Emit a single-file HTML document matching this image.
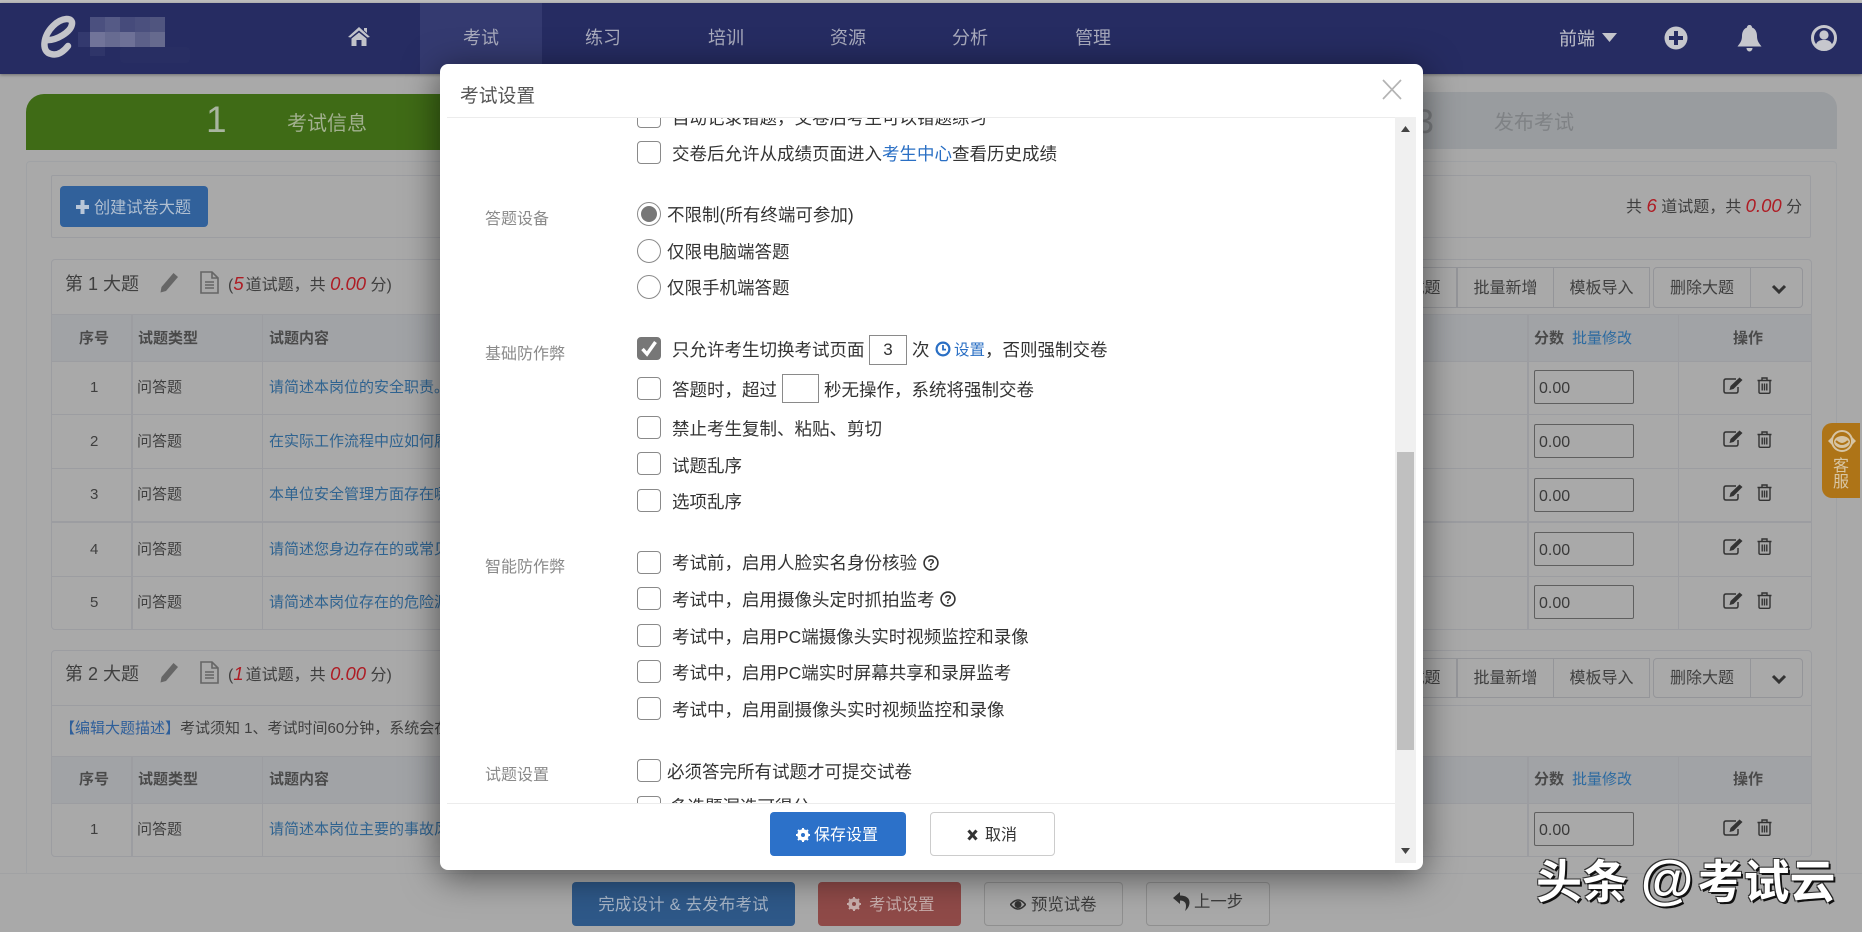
<!DOCTYPE html>
<html lang="zh-CN">
<head>
<meta charset="utf-8">
<title>考试设置</title>
<style>
html,body{margin:0;padding:0;width:1862px;height:932px;overflow:hidden;background:#a9a9a9;}
body{position:relative;font-family:"Liberation Sans","Noto Sans CJK SC",sans-serif;color:#3c3c3c;}
div,span,svg{box-sizing:border-box;}
.a{position:absolute;}
.t{position:absolute;line-height:24px;height:24px;white-space:nowrap;margin-top:1px;}
.nav{color:#a9abbd;font-size:18px;}
.box{position:absolute;border:1px solid #9c9da1;border-radius:4px;}
.hl{position:absolute;height:1px;background:#9c9da1;}
.vl{position:absolute;width:1px;background:#9c9da1;}
.thbg{position:absolute;background:#a1a3a6;}
.th{font-size:15px;font-weight:bold;color:#4a4a4a;}
.td{font-size:15px;color:#3f3f3f;}
.lk{font-size:15px;color:#2f6390;}
.in{position:absolute;left:1534px;width:100px;height:34px;border:1px solid #5f5f5f;border-radius:2px;font-size:16px;line-height:35px;padding-left:4px;color:#3a3a3a;}
.ico{position:absolute;}
.red{color:#ae1c24;font-style:italic;font-size:18.5px;}
.g{position:absolute;border:1px solid #949599;font-size:16px;text-align:center;color:#3f3f3f;}
.ft{position:absolute;top:882px;height:44px;border-radius:4px;font-size:16.4px;line-height:46px;}
.cb{position:absolute;left:637px;width:24px;height:23px;border:1.5px solid #8a8a8a;border-radius:4px;background:#fff;}
.rd{position:absolute;left:637px;width:24px;height:24px;border:1.5px solid #8a8a8a;border-radius:50%;background:#fff;}
.m{position:absolute;font-size:17.5px;line-height:24px;height:24px;white-space:nowrap;color:#333;left:232px;margin-top:1px;}
.lb{position:absolute;font-size:16px;line-height:24px;color:#8a8a8a;white-space:nowrap;left:45px;margin-top:2px;}
.mi{position:absolute;background:#fff;border:1px solid #8a8a8a;font-size:17px;text-align:center;color:#333;}
</style>
</head>
<body>

<!-- top bar -->
<div class="a" style="left:0;top:0;width:1862px;height:3px;background:#bdbdbd;"></div>
<div class="a" style="left:0;top:3px;width:1862px;height:71px;background:#262c62;box-shadow:0 1px 3px rgba(0,0,0,.35);"></div>
<div class="a" style="left:420px;top:3px;width:122px;height:71px;background:#343a70;"></div>

<!-- logo -->
<svg class="ico" style="left:40px;top:15px;" width="38" height="44" viewBox="0 0 38 44"><path d="M6 25 C16 26 31 17 32 9 C33 2 22 2 13 11 C3 21 1 37 11 39 C18 41 24 36 28 31" fill="none" stroke="#c4c5ca" stroke-width="6.5" stroke-linecap="round"/></svg>
<div class="a" style="left:78px;top:32px;width:12px;height:15px;background:#33396e;"></div>
<div class="a" style="left:90px;top:17px;width:15px;height:15px;background:#4b507f;"></div>
<div class="a" style="left:105px;top:17px;width:15px;height:15px;background:#555a86;"></div>
<div class="a" style="left:120px;top:17px;width:15px;height:15px;background:#464b7b;"></div>
<div class="a" style="left:135px;top:17px;width:15px;height:15px;background:#4b507e;"></div>
<div class="a" style="left:150px;top:17px;width:15px;height:15px;background:#50557f;"></div>
<div class="a" style="left:90px;top:32px;width:15px;height:15px;background:#717499;"></div>
<div class="a" style="left:105px;top:32px;width:15px;height:15px;background:#676b91;"></div>
<div class="a" style="left:120px;top:32px;width:15px;height:15px;background:#6e7197;"></div>
<div class="a" style="left:135px;top:32px;width:15px;height:15px;background:#5c6089;"></div>
<div class="a" style="left:150px;top:32px;width:15px;height:15px;background:#666a8e;"></div>
<div class="a" style="left:90px;top:47px;width:15px;height:9px;background:#2f3569;"></div>
<div class="a" style="left:120px;top:47px;width:70px;height:16px;background:#282e63;border-radius:4px;"></div>

<!-- nav -->
<svg class="ico" style="left:347px;top:26px;" width="24" height="20" viewBox="0 0 24 20"><path d="M12 1 L23 11 L20.5 11.5 L12 4.5 L3.5 11.5 L1 11 Z M17 2 h3 v5 l-3 -2.6 Z M4.5 12.5 L12 6.5 L19.5 12.5 V20 H14.5 V14 H9.5 V20 H4.5 Z" fill="#c2c3ca"/></svg>
<div class="t nav" style="left:463px;top:25px;">考试</div>
<div class="t nav" style="left:585px;top:25px;">练习</div>
<div class="t nav" style="left:708px;top:25px;">培训</div>
<div class="t nav" style="left:830px;top:25px;">资源</div>
<div class="t nav" style="left:952px;top:25px;">分析</div>
<div class="t nav" style="left:1075px;top:25px;">管理</div>
<div class="t nav" style="left:1559px;top:26px;color:#c0c1cb;">前端</div>
<svg class="ico" style="left:1602px;top:33px;" width="15" height="9" viewBox="0 0 15 9"><path d="M0 0 H15 L7.5 9 Z" fill="#c4c5cc"/></svg>
<svg class="ico" style="left:1664px;top:26px;" width="24" height="24" viewBox="0 0 24 24"><circle cx="12" cy="12" r="11.5" fill="#c6c7cd"/><path d="M10 5 h4 v5 h5 v4 h-5 v5 h-4 v-5 h-5 v-4 h5 Z" fill="#262c62"/></svg>
<svg class="ico" style="left:1737px;top:25px;" width="25" height="27" viewBox="0 0 25 27"><path d="M12.5 0 C14 0 15 1 15 2.5 C19 4 20 8 20 11 C20 16 22 18 24.5 21.5 H0.5 C3 18 5 16 5 11 C5 8 6 4 10 2.5 C10 1 11 0 12.5 0 Z M9.5 23 H15.5 C15.5 25 14 26.5 12.5 26.5 C11 26.5 9.5 25 9.5 23 Z" fill="#c6c7cd"/></svg>
<svg class="ico" style="left:1811px;top:25px;" width="26" height="26" viewBox="0 0 26 26"><circle cx="13" cy="13" r="11.5" fill="none" stroke="#c6c7cd" stroke-width="3"/><circle cx="13" cy="10" r="4.6" fill="#c6c7cd"/><path d="M4.5 20.5 C6 15.5 9.5 15 13 15 C16.5 15 20 15.5 21.5 20.5 C19 23.5 16 24.5 13 24.5 C10 24.5 7 23.5 4.5 20.5 Z" fill="#c6c7cd"/></svg>

<!-- steps -->
<div class="a" style="left:26px;top:94px;width:500px;height:56px;background:#3f6b16;border-radius:18px 0 0 0;"></div>
<div class="t" style="left:206px;top:105px;font-size:37px;line-height:30px;height:30px;color:#a9b5a0;margin:0;">1</div>
<div class="t" style="left:287px;top:111px;font-size:20px;color:#a2b08f;">考试信息</div>
<div class="a" style="left:1300px;top:92px;width:537px;height:57px;background:#999c9f;border-radius:0 16px 0 0;"></div>
<div class="t" style="left:1415px;top:107px;font-size:34px;line-height:30px;height:30px;color:#7b7d80;margin:0;">3</div>
<div class="t" style="left:1494px;top:110px;font-size:20px;color:#7f8285;">发布考试</div>

<!-- main panel -->
<div class="box" style="left:26px;top:161px;width:1811px;height:760px;border-color:#a0a2a5;"></div>
<div class="hl" style="left:0;top:873px;width:1862px;background:#a1a2a4;"></div>
<div class="a" style="left:0;top:874px;width:1862px;height:58px;background:#a9a9a9;"></div>

<div class="box" style="left:51px;top:175px;width:1760px;height:63px;border-radius:2px;"></div>
<div class="a" style="left:60px;top:186px;width:148px;height:41px;background:#31619b;border-radius:4px;"></div>
<svg class="ico" style="left:76px;top:200px;" width="13" height="14" viewBox="0 0 13 14"><path d="M4.5 0 h4 v5 h4.5 v4 h-4.5 v5 h-4 v-5 h-4.5 v-4 h4.5 Z" fill="#b8c6d8"/></svg>
<div class="t" style="left:94px;top:195px;font-size:16.2px;color:#b0bfd1;">创建试卷大题</div>
<div class="t" style="left:1626px;top:193px;font-size:16px;color:#3f3f3f;">共 <span class="red">6</span> 道试题，共 <span class="red">0.00</span> 分</div>

<!-- section 1 -->
<div class="box" style="left:51px;top:259px;width:1761px;height:371px;"></div>
<div class="t" style="left:65px;top:271px;font-size:18px;color:#3f3f3f;">第 1 大题</div>
<svg class="ico" style="left:160px;top:272px;" width="19" height="21" viewBox="0 0 19 21"><path d="M13.5 1 L18 5 L6 19 L0.5 20.5 L1.5 15 Z" fill="#666"/></svg>
<svg class="ico" style="left:200px;top:271px;" width="19" height="23" viewBox="0 0 19 23"><path d="M1 1 H12 L18 7 V22 H1 Z M12 1 V7 H18 M5 11 H14 M5 14 H14 M5 17 H14" fill="none" stroke="#666" stroke-width="1.6"/></svg>
<div class="t" style="left:228px;top:271px;font-size:16px;color:#3f3f3f;">(<span class="red" style="margin-right:2px;">5</span>道试题，共 <span class="red">0.00</span> 分)</div>
<div class="hl" style="left:51px;top:314px;width:1761px;"></div>
<div class="thbg" style="left:52px;top:315px;width:1759px;height:46px;"></div>
<div class="hl" style="left:51px;top:361px;width:1761px;"></div>
<div class="hl" style="left:51px;top:414px;width:1761px;"></div>
<div class="hl" style="left:51px;top:468px;width:1761px;"></div>
<div class="hl" style="left:51px;top:521px;width:1761px;height:2px;"></div>
<div class="hl" style="left:51px;top:576px;width:1761px;"></div>
<div class="vl" style="left:131px;top:314px;height:316px;width:2px;"></div>
<div class="vl" style="left:262px;top:314px;height:316px;"></div>
<div class="vl" style="left:1527px;top:314px;height:316px;width:2px;"></div>
<div class="vl" style="left:1678px;top:314px;height:316px;"></div>
<div class="t th" style="left:79px;top:326px;">序号</div>
<div class="t th" style="left:138px;top:326px;">试题类型</div>
<div class="t th" style="left:269px;top:326px;">试题内容</div>
<div class="t th" style="left:1534px;top:326px;">分数</div>
<div class="t lk" style="left:1572px;top:326px;color:#2c6aa0;">批量修改</div>
<div class="t th" style="left:1733px;top:326px;">操作</div>

<div class="t td" style="left:90px;top:375px;">1</div><div class="t td" style="left:137px;top:375px;">问答题</div><div class="t lk" style="left:269px;top:375px;">请简述本岗位的安全职责。</div>
<div class="t td" style="left:90px;top:429px;">2</div><div class="t td" style="left:137px;top:429px;">问答题</div><div class="t lk" style="left:269px;top:429px;">在实际工作流程中应如何履行</div>
<div class="t td" style="left:90px;top:482px;">3</div><div class="t td" style="left:137px;top:482px;">问答题</div><div class="t lk" style="left:269px;top:482px;">本单位安全管理方面存在哪些</div>
<div class="t td" style="left:90px;top:537px;">4</div><div class="t td" style="left:137px;top:537px;">问答题</div><div class="t lk" style="left:269px;top:537px;">请简述您身边存在的或常见的</div>
<div class="t td" style="left:90px;top:590px;">5</div><div class="t td" style="left:137px;top:590px;">问答题</div><div class="t lk" style="left:269px;top:590px;">请简述本岗位存在的危险源有</div>

<div class="in" style="top:370px;">0.00</div>
<div class="in" style="top:424px;">0.00</div>
<div class="in" style="top:478px;">0.00</div>
<div class="in" style="top:532px;">0.00</div>
<div class="in" style="top:585px;">0.00</div>

<svg class="ico" style="left:1723px;top:377px;" width="20" height="17" viewBox="0 0 20 17"><path d="M13 2 H3 Q1 2 1 4 V14 Q1 16 3 16 H13 Q15 16 15 14 V10" fill="none" stroke="#333" stroke-width="1.5"/><path d="M16.5 0.5 L19.5 3 L10.5 12 L6.5 13 L7.5 9 Z" fill="#333"/></svg>
<svg class="ico" style="left:1757px;top:377px;" width="15" height="17" viewBox="0 0 15 17"><path d="M0.5 3.5 H14.5 M5 3.5 V1 H10 V3.5 M2 3.5 V15 Q2 16.3 3.4 16.3 H11.6 Q13 16.3 13 15 V3.5 M5.2 6.5 V13.5 M7.5 6.5 V13.5 M9.8 6.5 V13.5" fill="none" stroke="#333" stroke-width="1.4"/></svg>
<svg class="ico" style="left:1723px;top:430px;" width="20" height="17" viewBox="0 0 20 17"><path d="M13 2 H3 Q1 2 1 4 V14 Q1 16 3 16 H13 Q15 16 15 14 V10" fill="none" stroke="#333" stroke-width="1.5"/><path d="M16.5 0.5 L19.5 3 L10.5 12 L6.5 13 L7.5 9 Z" fill="#333"/></svg>
<svg class="ico" style="left:1757px;top:431px;" width="15" height="17" viewBox="0 0 15 17"><path d="M0.5 3.5 H14.5 M5 3.5 V1 H10 V3.5 M2 3.5 V15 Q2 16.3 3.4 16.3 H11.6 Q13 16.3 13 15 V3.5 M5.2 6.5 V13.5 M7.5 6.5 V13.5 M9.8 6.5 V13.5" fill="none" stroke="#333" stroke-width="1.4"/></svg>
<svg class="ico" style="left:1723px;top:484px;" width="20" height="17" viewBox="0 0 20 17"><path d="M13 2 H3 Q1 2 1 4 V14 Q1 16 3 16 H13 Q15 16 15 14 V10" fill="none" stroke="#333" stroke-width="1.5"/><path d="M16.5 0.5 L19.5 3 L10.5 12 L6.5 13 L7.5 9 Z" fill="#333"/></svg>
<svg class="ico" style="left:1757px;top:484px;" width="15" height="17" viewBox="0 0 15 17"><path d="M0.5 3.5 H14.5 M5 3.5 V1 H10 V3.5 M2 3.5 V15 Q2 16.3 3.4 16.3 H11.6 Q13 16.3 13 15 V3.5 M5.2 6.5 V13.5 M7.5 6.5 V13.5 M9.8 6.5 V13.5" fill="none" stroke="#333" stroke-width="1.4"/></svg>
<svg class="ico" style="left:1723px;top:538px;" width="20" height="17" viewBox="0 0 20 17"><path d="M13 2 H3 Q1 2 1 4 V14 Q1 16 3 16 H13 Q15 16 15 14 V10" fill="none" stroke="#333" stroke-width="1.5"/><path d="M16.5 0.5 L19.5 3 L10.5 12 L6.5 13 L7.5 9 Z" fill="#333"/></svg>
<svg class="ico" style="left:1757px;top:538px;" width="15" height="17" viewBox="0 0 15 17"><path d="M0.5 3.5 H14.5 M5 3.5 V1 H10 V3.5 M2 3.5 V15 Q2 16.3 3.4 16.3 H11.6 Q13 16.3 13 15 V3.5 M5.2 6.5 V13.5 M7.5 6.5 V13.5 M9.8 6.5 V13.5" fill="none" stroke="#333" stroke-width="1.4"/></svg>
<svg class="ico" style="left:1723px;top:592px;" width="20" height="17" viewBox="0 0 20 17"><path d="M13 2 H3 Q1 2 1 4 V14 Q1 16 3 16 H13 Q15 16 15 14 V10" fill="none" stroke="#333" stroke-width="1.5"/><path d="M16.5 0.5 L19.5 3 L10.5 12 L6.5 13 L7.5 9 Z" fill="#333"/></svg>
<svg class="ico" style="left:1757px;top:592px;" width="15" height="17" viewBox="0 0 15 17"><path d="M0.5 3.5 H14.5 M5 3.5 V1 H10 V3.5 M2 3.5 V15 Q2 16.3 3.4 16.3 H11.6 Q13 16.3 13 15 V3.5 M5.2 6.5 V13.5 M7.5 6.5 V13.5 M9.8 6.5 V13.5" fill="none" stroke="#333" stroke-width="1.4"/></svg>

<div class="g" style="left:1360px;top:267px;width:97px;height:41px;line-height:41px;">新增试题</div>
<div class="g" style="left:1457px;top:267px;width:97px;height:41px;line-height:41px;">批量新增</div>
<div class="g" style="left:1553px;top:267px;width:97px;height:41px;line-height:41px;">模板导入</div>
<div class="g" style="left:1653px;top:267px;width:98px;height:41px;line-height:41px;border-radius:4px 0 0 4px;">删除大题</div>
<div class="g" style="left:1750px;top:267px;width:53px;height:41px;border-radius:0 4px 4px 0;"></div>
<svg class="ico" style="left:1771px;top:284px;" width="16" height="11" viewBox="0 0 16 11"><path d="M2 2 L8 8 L14 2" fill="none" stroke="#333" stroke-width="3"/></svg>

<!-- section 2 -->
<div class="box" style="left:51px;top:650px;width:1761px;height:207px;"></div>
<div class="t" style="left:65px;top:661px;font-size:18px;color:#3f3f3f;">第 2 大题</div>
<svg class="ico" style="left:160px;top:662px;" width="19" height="21" viewBox="0 0 19 21"><path d="M13.5 1 L18 5 L6 19 L0.5 20.5 L1.5 15 Z" fill="#666"/></svg>
<svg class="ico" style="left:200px;top:661px;" width="19" height="23" viewBox="0 0 19 23"><path d="M1 1 H12 L18 7 V22 H1 Z M12 1 V7 H18 M5 11 H14 M5 14 H14 M5 17 H14" fill="none" stroke="#666" stroke-width="1.6"/></svg>
<div class="t" style="left:228px;top:661px;font-size:16px;color:#3f3f3f;">(<span class="red" style="margin-right:2px;">1</span>道试题，共 <span class="red">0.00</span> 分)</div>
<div class="hl" style="left:51px;top:705px;width:1761px;"></div>
<div class="t" style="left:60px;top:716px;font-size:15px;color:#3f3f3f;"><span style="color:#2f5f9a;">【编辑大题描述】</span>考试须知 1、考试时间60分钟，系统会在</div>
<div class="thbg" style="left:52px;top:757px;width:1759px;height:46px;"></div>
<div class="hl" style="left:51px;top:756px;width:1761px;"></div>
<div class="hl" style="left:51px;top:803px;width:1761px;"></div>
<div class="vl" style="left:131px;top:756px;height:101px;width:2px;"></div>
<div class="vl" style="left:262px;top:756px;height:101px;"></div>
<div class="vl" style="left:1527px;top:756px;height:101px;width:2px;"></div>
<div class="vl" style="left:1678px;top:756px;height:101px;"></div>
<div class="t th" style="left:79px;top:767px;">序号</div>
<div class="t th" style="left:138px;top:767px;">试题类型</div>
<div class="t th" style="left:269px;top:767px;">试题内容</div>
<div class="t th" style="left:1534px;top:767px;">分数</div>
<div class="t lk" style="left:1572px;top:767px;color:#2c6aa0;">批量修改</div>
<div class="t th" style="left:1733px;top:767px;">操作</div>
<div class="t td" style="left:90px;top:817px;">1</div><div class="t td" style="left:137px;top:817px;">问答题</div><div class="t lk" style="left:269px;top:817px;">请简述本岗位主要的事故风险</div>
<div class="in" style="top:812px;">0.00</div>
<svg class="ico" style="left:1723px;top:819px;" width="20" height="17" viewBox="0 0 20 17"><path d="M13 2 H3 Q1 2 1 4 V14 Q1 16 3 16 H13 Q15 16 15 14 V10" fill="none" stroke="#333" stroke-width="1.5"/><path d="M16.5 0.5 L19.5 3 L10.5 12 L6.5 13 L7.5 9 Z" fill="#333"/></svg>
<svg class="ico" style="left:1757px;top:819px;" width="15" height="17" viewBox="0 0 15 17"><path d="M0.5 3.5 H14.5 M5 3.5 V1 H10 V3.5 M2 3.5 V15 Q2 16.3 3.4 16.3 H11.6 Q13 16.3 13 15 V3.5 M5.2 6.5 V13.5 M7.5 6.5 V13.5 M9.8 6.5 V13.5" fill="none" stroke="#333" stroke-width="1.4"/></svg>
<div class="g" style="left:1360px;top:658px;width:97px;height:40px;line-height:40px;">新增试题</div>
<div class="g" style="left:1457px;top:658px;width:97px;height:40px;line-height:40px;">批量新增</div>
<div class="g" style="left:1553px;top:658px;width:97px;height:40px;line-height:40px;">模板导入</div>
<div class="g" style="left:1653px;top:658px;width:98px;height:40px;line-height:40px;border-radius:4px 0 0 4px;">删除大题</div>
<div class="g" style="left:1750px;top:658px;width:53px;height:40px;border-radius:0 4px 4px 0;"></div>
<svg class="ico" style="left:1771px;top:674px;" width="16" height="11" viewBox="0 0 16 11"><path d="M2 2 L8 8 L14 2" fill="none" stroke="#333" stroke-width="3"/></svg>

<!-- side widget -->
<div class="a" style="left:1822px;top:423px;width:38px;height:75px;background:#ae7417;border-radius:10px 0 0 10px;"></div>
<svg class="ico" style="left:1827px;top:428px;" width="30" height="28" viewBox="0 0 30 28"><circle cx="15" cy="13" r="10" fill="none" stroke="#d6c4a4" stroke-width="2"/><ellipse cx="15" cy="14" rx="8" ry="6" fill="#d6c4a4"/><path d="M9 13 Q15 19 21 13" fill="none" stroke="#ae7417" stroke-width="2"/><path d="M1 13 L5 9 V17 Z M29 13 L25 9 V17 Z" fill="#d6c4a4"/></svg>
<div class="t" style="left:1833px;top:454px;font-size:16px;color:#d8c6a4;">客</div>
<div class="t" style="left:1833px;top:470px;font-size:16px;color:#d8c6a4;">服</div>

<!-- footer buttons -->
<div class="ft" style="left:572px;width:223px;background:#2e5888;color:#a7b5c7;text-align:center;letter-spacing:.25px;">完成设计 &amp; 去发布考试</div>
<div class="ft" style="left:818px;width:143px;background:#8f4a48;color:#c9aeac;padding-left:51px;">考试设置</div>
<svg class="ico" style="left:847px;top:897px;" width="14" height="14" viewBox="0 0 14 14"><circle cx="7" cy="7" r="4.2" fill="none" stroke="#c9aeac" stroke-width="3"/><path d="M7 0 V14 M0 7 H14 M2 2 L12 12 M12 2 L2 12" stroke="#c9aeac" stroke-width="2"/><circle cx="7" cy="7" r="2" fill="#8f4a48"/></svg>
<div class="ft" style="left:984px;width:139px;border:1px solid #8f8f8f;color:#3d3d3d;padding-left:46px;line-height:44px;">预览试卷</div>
<svg class="ico" style="left:1010px;top:898px;" width="16" height="13" viewBox="0 0 16 13"><path d="M0.5 6.5 Q8 -2.5 15.5 6.5 Q8 15.5 0.5 6.5 Z" fill="none" stroke="#333" stroke-width="1.5"/><circle cx="8" cy="6.5" r="3.5" fill="#333"/></svg>
<div class="ft" style="left:1146px;width:124px;border:1px solid #8f8f8f;color:#3d3d3d;padding-left:47px;line-height:38px;">上一步</div>
<svg class="ico" style="left:1173px;top:892px;" width="17" height="19" viewBox="0 0 17 19"><path d="M7 0 L0 6 L7 12 V8.5 C11 8.5 13 10.5 13 14 C13 16 12.5 17.5 12 19 C15 16.5 16.5 13.5 16.5 10.5 C16.5 6 13 3.5 7 3.5 Z" fill="#333"/></svg>

<!-- watermark -->
<div class="t" style="left:1536px;top:852px;font-size:46px;line-height:56px;height:56px;font-weight:bold;color:#fff;margin:0;text-shadow:2px 2px 0 #111,-1px -1px 0 #333,1px -1px 0 #333,-1px 1px 0 #333;">头条 <span style="font-size:54px;margin-right:4px;">@</span><span style="font-size:46px;">考试云</span></div>

<!-- modal -->
<div class="a" style="left:440px;top:64px;width:983px;height:806px;background:#fff;border-radius:8px;box-shadow:0 6px 36px rgba(0,0,0,.55);">
  <div class="t" style="left:20px;top:19px;font-size:18.8px;color:#555;">考试设置</div>
  <div class="a" style="left:7px;top:53px;width:948px;height:1px;background:#ececec;"></div>
  <svg class="ico" style="left:942px;top:15px;" width="20" height="21" viewBox="0 0 20 21"><path d="M1 1 L19 20 M19 1 L1 20" stroke="#b4b4b4" stroke-width="1.7" fill="none"/></svg>

  <!-- scrollbar -->
  <div class="a" style="left:955px;top:53px;width:21px;height:746px;background:#f0f0f0;"></div>
  <div class="a" style="left:957px;top:388px;width:17px;height:298px;background:#c0c0c0;"></div>
  <svg class="ico" style="left:961px;top:62px;" width="9" height="6" viewBox="0 0 9 6"><path d="M0 6 L4.5 0 L9 6 Z" fill="#444"/></svg>
  <svg class="ico" style="left:961px;top:784px;" width="9" height="6" viewBox="0 0 9 6"><path d="M0 0 L9 0 L4.5 6 Z" fill="#444"/></svg>

  <!-- content clip -->
  <div class="a" style="left:0;top:54px;width:955px;height:685px;overflow:hidden;">
    <div class="cb" style="left:197px;top:-13px;"></div>
    <div class="m" style="top:-13px;">自动记录错题，交卷后考生可以错题练习</div>
    <div class="cb" style="left:197px;top:23px;"></div>
    <div class="m" style="top:23px;">交卷后允许从成绩页面进入<span style="color:#2a6fc4;">考生中心</span>查看历史成绩</div>

    <div class="lb" style="top:88px;">答题设备</div>
    <div class="rd" style="left:197px;top:84px;"></div>
    <div class="a" style="left:201px;top:88px;width:16px;height:16px;border-radius:50%;background:#777;"></div>
    <div class="m" style="left:227px;top:84px;">不限制(所有终端可参加)</div>
    <div class="rd" style="left:197px;top:121px;"></div>
    <div class="m" style="left:227px;top:121px;">仅限电脑端答题</div>
    <div class="rd" style="left:197px;top:157px;"></div>
    <div class="m" style="left:227px;top:157px;">仅限手机端答题</div>

    <div class="lb" style="top:223px;">基础防作弊</div>
    <div class="cb" style="left:197px;top:219px;background:#777;border-color:#777;"></div>
    <svg class="ico" style="left:200px;top:222px;" width="18" height="17" viewBox="0 0 18 17"><path d="M2.5 9 L7 14 L15.5 2" fill="none" stroke="#fff" stroke-width="3.4"/></svg>
    <div class="m" style="top:219px;">只允许考生切换考试页面</div>
    <div class="mi" style="left:429px;top:217px;width:38px;height:30px;line-height:28px;">3</div>
    <div class="m" style="left:472px;top:219px;">次</div>
    <svg class="ico" style="left:495px;top:223px;" width="16" height="16" viewBox="0 0 16 16"><circle cx="8" cy="8" r="6.4" fill="none" stroke="#2a6fc4" stroke-width="2.2"/><path d="M8 4 V8.6 H11" fill="none" stroke="#2a6fc4" stroke-width="1.8"/></svg>
    <div class="m" style="left:514px;top:220px;font-size:15.5px;color:#2a6fc4;">设置</div>
    <div class="m" style="left:545px;top:219px;">，否则强制交卷</div>

    <div class="cb" style="left:197px;top:259px;"></div>
    <div class="m" style="top:259px;">答题时，超过</div>
    <div class="mi" style="left:342px;top:256px;width:37px;height:29px;"></div>
    <div class="m" style="left:384px;top:259px;">秒无操作，系统将强制交卷</div>

    <div class="cb" style="left:197px;top:298px;"></div>
    <div class="m" style="top:298px;">禁止考生复制、粘贴、剪切</div>
    <div class="cb" style="left:197px;top:334px;"></div>
    <div class="m" style="top:335px;">试题乱序</div>
    <div class="cb" style="left:197px;top:371px;"></div>
    <div class="m" style="top:371px;">选项乱序</div>

    <div class="lb" style="top:436px;">智能防作弊</div>
    <div class="cb" style="left:197px;top:433px;"></div>
    <div class="m" style="top:432px;">考试前，启用人脸实名身份核验</div>
    <svg class="ico" style="left:483px;top:437px;" width="16" height="16" viewBox="0 0 16 16"><circle cx="8" cy="8" r="6.9" fill="none" stroke="#333" stroke-width="1.6"/><text x="8" y="12.4" font-size="12" font-weight="bold" text-anchor="middle" fill="#333" font-family="Liberation Sans">?</text></svg>
    <div class="cb" style="left:197px;top:469px;"></div>
    <div class="m" style="top:469px;">考试中，启用摄像头定时抓拍监考</div>
    <svg class="ico" style="left:500px;top:473px;" width="16" height="16" viewBox="0 0 16 16"><circle cx="8" cy="8" r="6.9" fill="none" stroke="#333" stroke-width="1.6"/><text x="8" y="12.4" font-size="12" font-weight="bold" text-anchor="middle" fill="#333" font-family="Liberation Sans">?</text></svg>
    <div class="cb" style="left:197px;top:506px;"></div>
    <div class="m" style="top:506px;">考试中，启用PC端摄像头实时视频监控和录像</div>
    <div class="cb" style="left:197px;top:542px;"></div>
    <div class="m" style="top:542px;">考试中，启用PC端实时屏幕共享和录屏监考</div>
    <div class="cb" style="left:197px;top:579px;"></div>
    <div class="m" style="top:579px;">考试中，启用副摄像头实时视频监控和录像</div>

    <div class="lb" style="top:644px;">试题设置</div>
    <div class="cb" style="left:197px;top:641px;"></div>
    <div class="m" style="left:227px;top:641px;">必须答完所有试题才可提交试卷</div>
    <div class="cb" style="left:197px;top:678px;"></div>
    <div class="m" style="left:230px;top:676px;">多选题漏选可得分 <span style="color:#2a6fc4;font-size:15px;position:relative;top:3px;">得分设置</span></div>
  </div>

  <div class="a" style="left:7px;top:739px;width:948px;height:1px;background:#ececec;"></div>
  <div class="a" style="left:330px;top:748px;width:136px;height:44px;background:#2c71c9;border-radius:4px;color:#fff;font-size:16px;line-height:48px;padding-left:44px;">保存设置</div>
  <svg class="ico" style="left:356px;top:764px;" width="14" height="14" viewBox="0 0 14 14"><circle cx="7" cy="7" r="4.2" fill="none" stroke="#fff" stroke-width="3"/><path d="M7 0 V14 M0 7 H14 M2 2 L12 12 M12 2 L2 12" stroke="#fff" stroke-width="2"/><circle cx="7" cy="7" r="2" fill="#2c71c9"/></svg>
  <div class="a" style="left:490px;top:748px;width:125px;height:44px;background:#fff;border:1px solid #ccc;border-radius:4px;color:#333;font-size:16px;line-height:46px;padding-left:54px;">取消</div>
  <svg class="ico" style="left:527px;top:765px;" width="11" height="12" viewBox="0 0 11 12"><path d="M1.5 1.5 L9.5 10.5 M9.5 1.5 L1.5 10.5" stroke="#333" stroke-width="3"/></svg>
</div>

</body>
</html>
